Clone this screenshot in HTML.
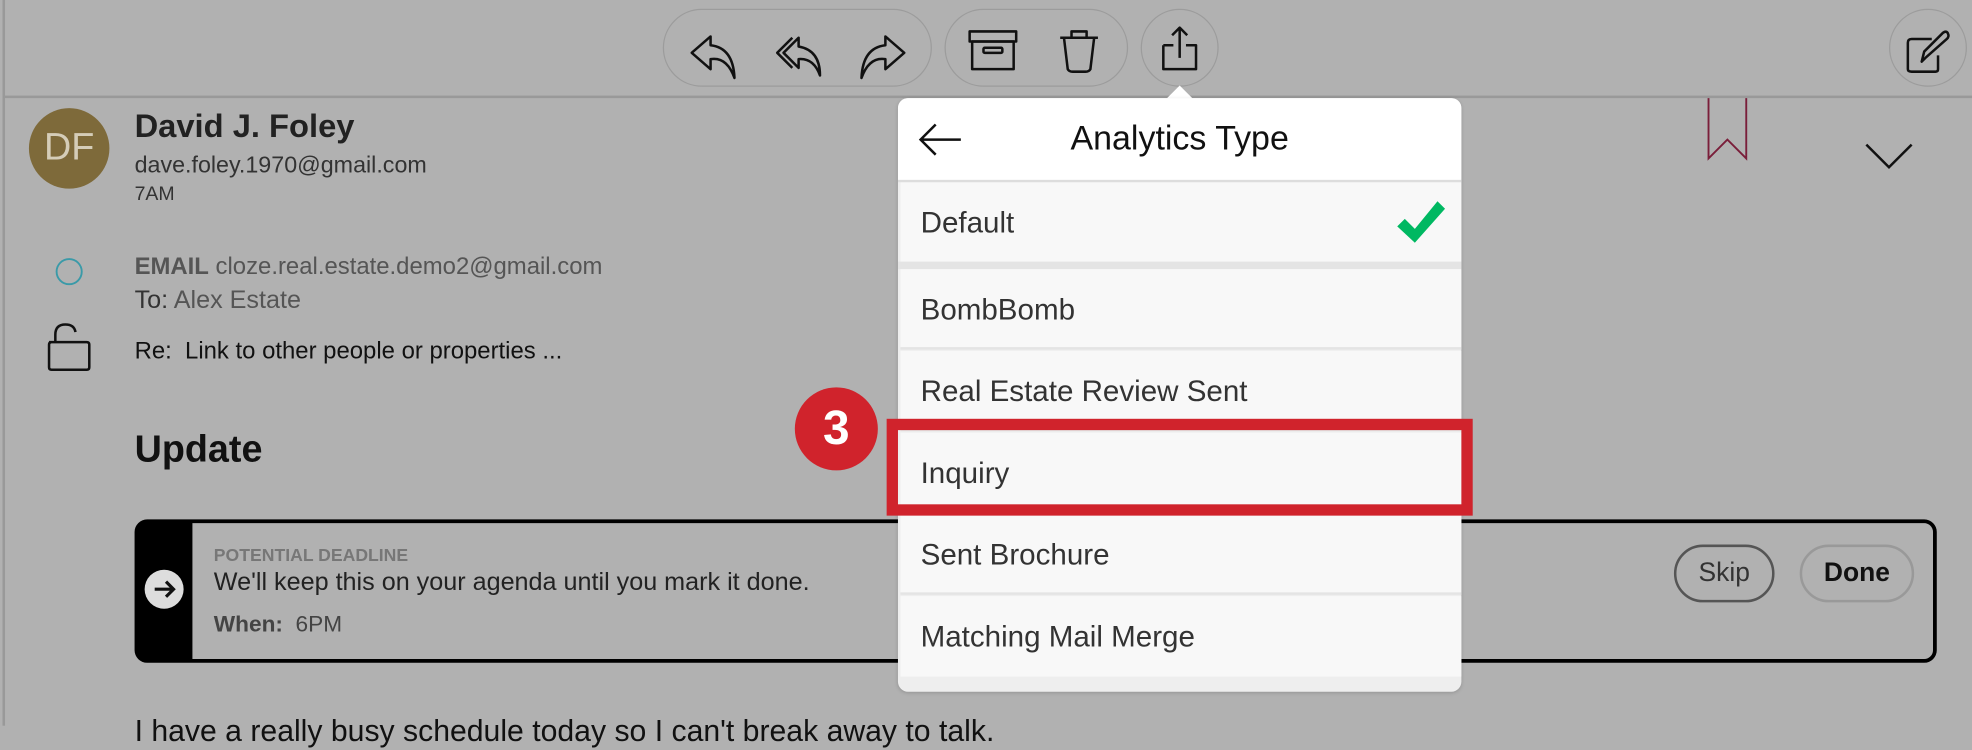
<!DOCTYPE html>
<html><head><meta charset="utf-8"><style>
html,body{margin:0;padding:0;width:1972px;height:726px;overflow:hidden;background:#b1b1b1;}
#w{position:absolute;left:0;top:0;width:1568px;height:577px;transform:scale(1.25765);transform-origin:0 0;font-family:"Liberation Sans",sans-serif;}
.a{position:absolute;white-space:nowrap;}
.pill{position:absolute;border:1.5px solid #9c9c9c;border-radius:31px;box-sizing:border-box;}
.row{position:absolute;left:2px;width:446px;height:64px;background:#f8f8f8;font-size:23.5px;color:#333;line-height:64px;padding-left:16px;box-sizing:border-box;border-bottom:2px solid #e4e4e4;}
svg{position:absolute;overflow:visible;}
</style></head><body><div id="w">
<div class="a" style="left:2px;top:0;width:1.5px;height:577px;background:#999"></div>
<div class="a" style="left:3px;top:76px;width:1565px;height:2px;background:#999"></div>

<div class="pill" style="left:527px;top:7px;width:214px;height:62px"></div>
<div class="pill" style="left:751px;top:7px;width:146px;height:62px"></div>
<div class="pill" style="left:907px;top:7px;width:62px;height:62px"></div>
<div class="pill" style="left:1502px;top:7px;width:62px;height:62px"></div>

<svg style="left:0;top:0" width="1568" height="80" fill="none" stroke="#111" stroke-width="2" stroke-linejoin="round">
<path d="M565 29 L550 42 L565 55 L565 47 Q578 45 584 62 Q583 38 565 36 Z"/>
<path d="M630 30 L618 42 L630 54 M635 30 L623 42 L635 54 L635 47 Q647 46 652 60 Q652 40 635 37 Z"/>
<path d="M704 29 L719 42 L704 55 L704 47 Q691 45 685 62 Q686 38 704 36 Z"/>
<rect x="771" y="25" width="37" height="8"/><rect x="773" y="33" width="33" height="22"/><rect x="782" y="38" width="15" height="4" rx="1"/>
<path d="M843 30 H873 M852 30 V25 H864 V30 M846 30 L849 55 Q850 57 853 57 H863 Q866 57 867 55 L870 30"/>
<path d="M925 36 V55 H951 V36 H943 M933 36 H925 M938 22 V46 M932 28 L938 22 L944 28"/>
<path d="M1536 31 H1520 Q1517 31 1517 34 V55 Q1517 57 1520 57 H1539 Q1541 57 1541 55 V44 M1531 46 L1528 49 L1530 41 L1545 26 Q1548 24 1549 27 Q1550 29 1548 31 Z"/>
</svg>

<svg style="left:0;top:0" width="1568" height="300" fill="none">
<path d="M1358.5 78 V126 L1373.5 111 L1388.5 126 V78" stroke="#7a1e3a" stroke-width="1.5"/>
<path d="M1484 115 L1502 133 L1520 115" stroke="#111" stroke-width="2"/>
<circle cx="55" cy="216" r="10" stroke="#3a9aa8" stroke-width="1.5"/>
<path d="M44 272 V266 Q44 258 52 258 Q59 258 60 264 M39 272 H69 Q71 272 71 274 V292 Q71 294 69 294 H41 Q39 294 39 292 V274 Q39 272 41 272 Z" stroke="#111" stroke-width="2"/>
</svg>

<div class="a" style="left:23px;top:86px;width:64px;height:64px;border-radius:50%;background:#7e6a3a;color:#d5cdb8;font-size:30px;line-height:64px;text-align:center;">DF</div>
<div class="a" style="left:107px;top:85px;font-size:26px;font-weight:bold;color:#222">David J. Foley</div>
<div class="a" style="left:107px;top:120px;font-size:18.5px;color:#333">dave.foley.1970@gmail.com</div>
<div class="a" style="left:107px;top:146px;font-size:15.5px;color:#333">7AM</div>
<div class="a" style="left:107px;top:202px;font-size:19px;color:#555"><b>EMAIL</b> cloze.real.estate.demo2@gmail.com</div>
<div class="a" style="left:107px;top:228px;font-size:20px;color:#555"><span style="color:#333">To:</span> Alex Estate</div>
<div class="a" style="left:107px;top:269px;font-size:19px;color:#111">Re:&nbsp; Link to other people or properties ...</div>
<div class="a" style="left:107px;top:341px;font-size:30px;font-weight:bold;color:#111">Update</div>

<div class="a" style="left:107px;top:413px;width:1433px;height:114px;border:3.5px solid #000;border-left-width:46px;border-radius:10px;box-sizing:border-box;"></div>
<div class="a" style="left:115px;top:453px;width:31px;height:31px;border-radius:50%;background:#ddd;"></div>
<svg style="left:115px;top:453px" width="31" height="31" fill="none" stroke="#111" stroke-width="2.5"><path d="M8 15.5 H23 M17 9.5 L23 15.5 L17 21.5"/></svg>
<div class="a" style="left:170px;top:433px;font-size:14px;font-weight:bold;color:#777">POTENTIAL DEADLINE</div>
<div class="a" style="left:170px;top:452px;font-size:20px;color:#222">We'll keep this on your agenda until you mark it done.</div>
<div class="a" style="left:170px;top:486px;font-size:18px;color:#444"><b>When:</b>&nbsp; 6PM</div>
<div class="a" style="left:1331px;top:433px;width:80px;height:46px;border:2px solid #555;border-radius:23px;box-sizing:border-box;text-align:center;line-height:42px;font-size:21px;color:#333">Skip</div>
<div class="a" style="left:1431px;top:433px;width:91px;height:46px;border:2px solid #999;border-radius:23px;box-sizing:border-box;text-align:center;line-height:42px;font-size:21px;font-weight:bold;color:#111">Done</div>
<div class="a" style="left:107px;top:568px;font-size:24px;color:#111">I have a really busy schedule today so I can't break away to talk.</div>

<!-- popover -->
<svg style="left:926px;top:68px" width="24" height="12"><path d="M0 12 L12 0 L24 12 Z" fill="#fff"/></svg>
<div class="a" style="left:714px;top:78px;width:448px;height:472px;background:#eee;border-radius:8px;overflow:hidden;box-shadow:0 1px 3px rgba(0,0,0,.15)">
 <div class="a" style="left:0;top:0;width:448px;height:65px;background:#fff;border-bottom:2px solid #ddd"></div>
 <svg style="left:16px;top:18px" width="40" height="30" fill="none" stroke="#111" stroke-width="2"><path d="M34 15 H2 M14 3 L2 15 L14 27"/></svg>
 <div class="a" style="left:0;top:17px;width:448px;text-align:center;font-size:27px;color:#111">Analytics Type</div>
 <div class="row" style="top:67px;height:63px;border-bottom:none">Default</div>
 <div class="a" style="left:0;top:130px;width:448px;height:6px;background:#e4e4e4"></div>
 <svg style="left:397px;top:82px" width="40" height="34"><path d="M0 20 L6 14 L14 22 L32 0 L38 6 L14 33 Z" fill="#00b862"/></svg>
 <div class="row" style="top:136px">BombBomb</div>
 <div class="row" style="top:201px">Real Estate Review Sent</div>
 <div class="row" style="top:266px">Inquiry</div>
 <div class="row" style="top:331px">Sent Brochure</div>
 <div class="row" style="top:396px;border-bottom:none">Matching Mail Merge</div>
</div>
<div class="a" style="left:705px;top:333px;width:466px;height:77px;border:9px solid #d0232c;box-sizing:border-box"></div>
<div class="a" style="left:632px;top:308px;width:66px;height:66px;border-radius:50%;background:#d0232c;color:#fff;font-size:38px;font-weight:bold;line-height:66px;text-align:center">3</div>
</div></body></html>
